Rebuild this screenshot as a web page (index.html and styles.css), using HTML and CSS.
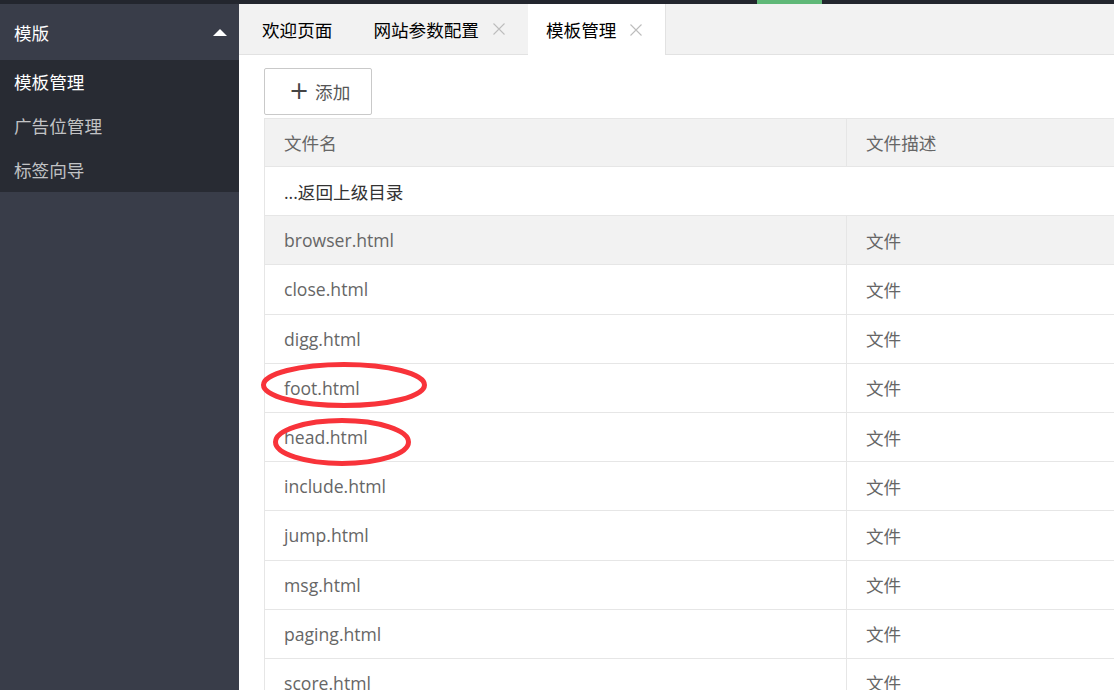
FILE: index.html
```html
<!DOCTYPE html>
<html lang="zh-CN">
<head>
<meta charset="utf-8">
<title>模板管理</title>
<link rel="stylesheet" href="styles.css">
</head>
<body>
<div class="topbar"><span class="top-indicator"></span></div>
<div class="app">
  <aside class="sidebar">
    <div class="nav-head">
      <span>模版</span>
      <span class="caret"></span>
    </div>
    <ul class="nav-sub">
      <li class="active">模板管理</li>
      <li>广告位管理</li>
      <li>标签向导</li>
    </ul>
  </aside>
  <main class="main">
    <div class="tabs">
      <div class="tab first">欢迎页面</div>
      <div class="tab">网站参数配置<svg class="close" width="12" height="12" viewBox="0 0 12 12"><path d="M0.5 0.5L11.5 11.5M11.5 0.5L0.5 11.5" stroke="#bdbdbd" stroke-width="1.1" fill="none"/></svg></div>
      <div class="tab current">模板管理<svg class="close" width="12" height="12" viewBox="0 0 12 12"><path d="M0.5 0.5L11.5 11.5M11.5 0.5L0.5 11.5" stroke="#bdbdbd" stroke-width="1.1" fill="none"/></svg></div>
    </div>
    <div class="content">
      <button class="btn"><span class="plus">+</span>添加</button>
      <div class="grid">
        <div class="row head"><div class="c1">文件名</div><div class="c2">文件描述</div></div>
        <div class="row"><div class="c1 dark">...返回上级目录</div><div class="c2 empty"></div></div>
        <div class="row hover"><div class="c1">browser.html</div><div class="c2">文件</div></div>
        <div class="row"><div class="c1">close.html</div><div class="c2">文件</div></div>
        <div class="row"><div class="c1">digg.html</div><div class="c2">文件</div></div>
        <div class="row"><div class="c1">foot.html</div><div class="c2">文件</div></div>
        <div class="row"><div class="c1">head.html</div><div class="c2">文件</div></div>
        <div class="row"><div class="c1">include.html</div><div class="c2">文件</div></div>
        <div class="row"><div class="c1">jump.html</div><div class="c2">文件</div></div>
        <div class="row"><div class="c1">msg.html</div><div class="c2">文件</div></div>
        <div class="row"><div class="c1">paging.html</div><div class="c2">文件</div></div>
        <div class="row"><div class="c1">score.html</div><div class="c2">文件</div></div>
      </div>
    </div>
  </main>
</div>
<svg class="marks" width="1114" height="690" viewBox="0 0 1114 690">
  <ellipse cx="344" cy="385" rx="80.5" ry="20.5" fill="none" stroke="#f8333a" stroke-width="5"/>
  <ellipse cx="342" cy="442" rx="66.5" ry="21.5" fill="none" stroke="#f8333a" stroke-width="5"/>
</svg>
</body>
</html>
```
FILE: styles.css
```css
html, body {
  margin: 0;
  padding: 0;
  width: 1114px;
  height: 690px;
  overflow: hidden;
  background: #fff;
  font-family: "Open Sans", "Noto Sans CJK SC", sans-serif;
}
.topbar {
  height: 4px;
  background: #23262e;
  position: relative;
}
.top-indicator {
  position: absolute;
  left: 757px;
  top: 0;
  width: 65px;
  height: 4px;
  background: #5fb878;
}
.app {
  display: flex;
  height: 686px;
}
.sidebar {
  width: 239px;
  flex: none;
  background: #393d49;
}
.nav-head {
  height: 56px;
  display: flex;
  align-items: center;
  justify-content: space-between;
  padding: 0 12px 0 14px;
  color: #fff;
  font-size: 17.6px;
  font-family: "Noto Sans CJK SC", sans-serif;
}
.caret {
  width: 0;
  height: 0;
  border-left: 7px solid transparent;
  border-right: 7px solid transparent;
  border-bottom: 7px solid #fff;
}
.nav-sub {
  list-style: none;
  margin: 0;
  padding: 0;
  background: #282b33;
}
.nav-sub li {
  height: 44px;
  line-height: 44px;
  padding-left: 14px;
  font-size: 17.6px;
  font-family: "Noto Sans CJK SC", sans-serif;
  color: rgba(255,255,255,0.72);
}
.nav-sub li.active {
  color: #fff;
}
.main {
  flex: 1;
  min-width: 0;
  overflow: hidden;
}
.tabs {
  height: 50px;
  background: #f2f2f2;
  border-bottom: 1px solid #e2e2e2;
  display: flex;
}
.tab {
  display: flex;
  align-items: center;
  padding: 0 23px 0 18px;
  height: 50px;
  font-size: 17.6px;
  color: #000;
  font-family: "Noto Sans CJK SC", sans-serif;
}
.tab.first {
  padding-left: 23px;
}
.tab.current {
  background: #fff;
  height: 51px;
  border-right: 1px solid #e2e2e2;
  padding-right: 23px;
  box-sizing: border-box;
}
.close {
  margin-left: 14px;
  flex: none;
}
.content {
  padding: 13px 0 0 25px;
}
.btn {
  display: flex;
  align-items: center;
  width: 108px;
  height: 47px;
  padding: 0 0 0 24px;
  border: 1px solid #c9c9c9;
  border-radius: 2px;
  background: #fff;
  color: #555;
  font-size: 17.6px;
  font-family: "Noto Sans CJK SC", sans-serif;
  box-sizing: border-box;
}
.plus {
  font-family: "DejaVu Sans", sans-serif;
  font-size: 24px;
  line-height: 1;
  color: #444;
  margin-right: 6px;
  margin-top: -2px;
}
.grid {
  margin-top: 3px;
  width: 900px;
  border-top: 1px solid #e6e6e6;
  border-left: 1px solid #e6e6e6;
}
.row {
  display: flex;
  height: 49.2px;
  box-sizing: border-box;
  border-bottom: 1px solid #e6e6e6;
  font-size: 17.6px;
  color: #666;
  align-items: stretch;
}
.row.head {
  height: 48px;
  background: #f2f2f2;
}
.row.hover {
  background: #f2f2f2;
}
.c1 {
  width: 581px;
  flex: none;
  box-sizing: border-box;
  padding-left: 19px;
  display: flex;
  align-items: center;
}
.c2 {
  flex: 1;
  border-left: 1px solid #e6e6e6;
  padding-left: 19px;
  display: flex;
  align-items: center;
}
.c2.empty {
  border-left-color: transparent;
}
.dark {
  color: #333;
}
.marks {
  position: absolute;
  left: 0;
  top: 0;
  pointer-events: none;
}
```
